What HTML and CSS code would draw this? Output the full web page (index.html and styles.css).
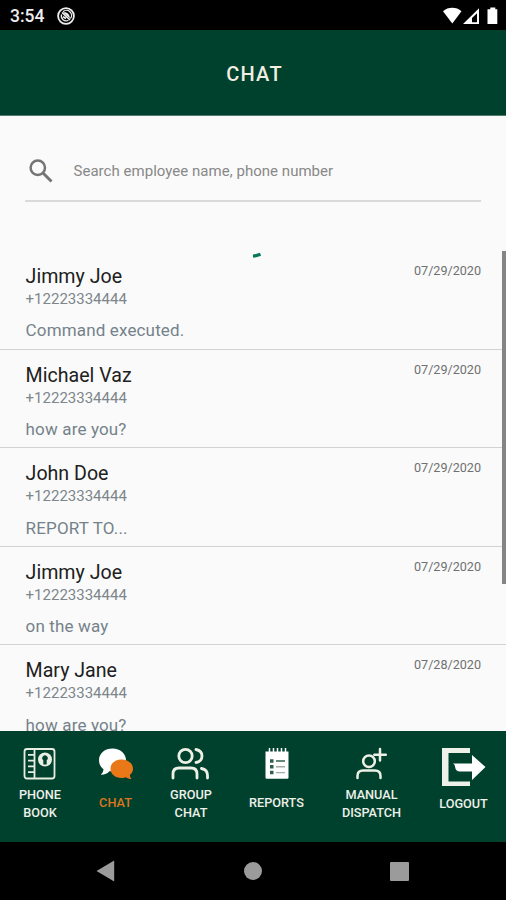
FILE: index.html
```html
<!DOCTYPE html>
<html lang="en">
<head>
<meta charset="utf-8">
<title>Chat</title>
<link rel="stylesheet" href="styles.css">
</head>
<body>
<div class="phone">
  <div class="status">
    <span class="clock">3:54</span>
    <svg class="alert" width="18" height="18" viewBox="0 0 18 18" fill="none" stroke="#eee"><circle cx="9" cy="9" r="7.9" stroke-width="1.8"/><path d="M4.600 7.500A4.800 4.800 0 0 0 11.500 13.200M6 4.800A5 5 0 0 1 13.400 11.500" stroke-width="1.300"/><path d="M6 5.500C9.500 4.500 13 7 12.800 11.500Z" fill="#eee" stroke="none"/><path d="M5 5.500L13 13M6 9.800l3 1.700" stroke-width="1.600"/></svg>
    <svg class="signals" width="56" height="18" viewBox="0 0 56 18" fill="#fff"><path d="M1 4.300C6-.3 14.500-.3 19.500 4.300L10.300 16.500Z"/><path fill-rule="evenodd" d="M21 17L37 1.300V17ZM30 15.200H35V6.200L30 11Z"/><path d="M48.300.500h5v1.800h2V17h-9.800V2.300h2.800Z"/></svg>
  </div>
  <header class="header"><h1>CHAT</h1></header>
  <main class="content">
    <div class="search">
      <svg width="24" height="24" viewBox="0 0 24 24" fill="none" stroke="#747474" stroke-width="2.500"><circle cx="8.800" cy="8.800" r="7.200"/><path d="M14 14l8.500 8.500" stroke-width="3"/></svg>
      <span>Search employee name, phone number</span>
    </div>
    <div class="list">
      <article class="row"><div class="top"><h2>Jimmy Joe</h2><time>07/29/2020</time></div><p class="number">+12223334444</p><p class="message">Command executed.</p></article>
      <article class="row"><div class="top"><h2>Michael Vaz</h2><time>07/29/2020</time></div><p class="number">+12223334444</p><p class="message">how are you?</p></article>
      <article class="row"><div class="top"><h2>John Doe</h2><time>07/29/2020</time></div><p class="number">+12223334444</p><p class="message">REPORT TO...</p></article>
      <article class="row"><div class="top"><h2>Jimmy Joe</h2><time>07/29/2020</time></div><p class="number">+12223334444</p><p class="message">on the way</p></article>
      <article class="row"><div class="top"><h2>Mary Jane</h2><time>07/28/2020</time></div><p class="number">+12223334444</p><p class="message">how are you?</p></article>
      <svg class="spinner" width="10" height="6" viewBox="0 0 10 6"><path d="M1 4.200Q4 4 8.500 2.300" fill="none" stroke="#08775b" stroke-width="3.200"/></svg>
      <div class="scrollbar"></div>
    </div>
  </main>
  <nav class="tabs">
    <div class="tab">
      <svg width="34" height="34" viewBox="0 0 34 34" fill="none" stroke="#e8eee2" stroke-width="1.800"><rect x="1.500" y="2" width="30" height="29.500" rx="2.500"/><path d="M11.500 2v29.500M5 7.800h7M5 13.600h7M5 19.400h7M5 25.200h7"/><circle cx="22" cy="12.500" r="7" fill="#e8eee2" stroke="none"/><path d="M20.300 17.500v-4.200a2.700 2.700 0 1 1 3.400 0v4.200Z" fill="#00412e" stroke="none"/></svg>
      <span>PHONE<br>BOOK</span>
    </div>
    <div class="tab active single">
      <svg width="36" height="34" viewBox="0 0 36 34"><path d="M14.500 1.500C7 1.500 1 6.300 1 13c0 4 1.500 7 4.500 9.200-.2 2.500-1.200 4-2.700 5.500 4 0 7-1.500 8.500-3.500h4C23 24 28 19 28 13S22.500 1.500 14.500 1.500Z" fill="#fff"/><path d="M23.500 12.500c-6.700 0-11 4-11 9.200s4.500 9.300 11 9.300c2 0 3.200-.2 4.500-.7 1.500 1.200 3.200 1.800 5.500 1.800-1.200-1.200-1.600-2.700-1.500-4.300 2-1.700 3-3.700 3-6.100 0-5.200-4.800-9.200-11.500-9.200Z" fill="#e97818"/></svg>
      <span>CHAT</span>
    </div>
    <div class="tab">
      <svg width="40" height="34" viewBox="0 0 40 34" fill="none" stroke="#edf0e5" stroke-width="2.800" stroke-linecap="round" stroke-linejoin="round"><circle cx="14.500" cy="9" r="6.700"/><path d="M2 31v-4q0-6 6-6h12q6 0 6 6v4M25 2.500c8 1.500 8 11.500 0 13M30.500 21.500q6 1 6 7V31"/></svg>
      <span>GROUP<br>CHAT</span>
    </div>
    <div class="tab single">
      <svg width="26" height="34" viewBox="0 0 26 34"><path d="M1.500 4.500h23v26q0 1.200-1.200 1.200H2.700q-1.200 0-1.200-1.200Z" fill="#fff"/><path d="M5.500 1v4M9.500 1v4M13.500 1v4M17.500 1v4M21.500 1v4" stroke="#fff" stroke-width="1.500"/><path d="M6 12.200h3.500v3.500H6ZM6 18h3.500v3.500H6ZM6 23.800h3.500v3.500H6Z" fill="#31604e"/><path d="M12 14h9" stroke="#31604e" stroke-width="1.500"/><path d="M12 19.800h9M12 25.600h9" stroke="#9faea4" stroke-width="1.400"/></svg>
      <span>REPORTS</span>
    </div>
    <div class="tab">
      <svg width="34" height="34" viewBox="0 0 34 34" fill="none" stroke="#edf0e5" stroke-width="2.500" stroke-linecap="round"><circle cx="14" cy="14.300" r="5.800"/><path d="M2.500 31v-2q0-5.500 5.500-5.500h12q5.500 0 5.500 5.500v2M25 2v11.500M19.300 7.700h11.500"/></svg>
      <span>MANUAL<br>DISPATCH</span>
    </div>
    <div class="tab single logout">
      <svg width="46" height="40" viewBox="0 0 46 40"><path d="M1 1h28v5H7.500v28.500H29v4.500H1Z" fill="#edf1e8"/><path d="M12 16.500h19V8l13.500 12L31 33v-8.500H19q-4.500 0-5-5Q14 17.500 12 16.500Z" fill="#fff"/></svg>
      <span>LOGOUT</span>
    </div>
  </nav>
  <footer class="system">
    <svg width="19" height="22" viewBox="0 0 19 22" fill="#9b9b9b"><path d="M18.200.500v21L.500 11Z"/></svg>
    <svg width="18" height="18" viewBox="0 0 18 18" fill="#9b9b9b"><circle cx="9" cy="9" r="9"/></svg>
    <svg width="19" height="19" viewBox="0 0 19 19" fill="#9b9b9b"><rect width="19" height="19" rx="1"/></svg>
  </footer>
</div>
</body>
</html>
```

FILE: styles.css
```css
* { box-sizing: border-box; }
body { margin: 0; background: #000; font-family: Roboto, "Liberation Sans", sans-serif; }
h1, h2, p { margin: 0; font-weight: 400; }
svg { display: block; flex: none; }
.phone { width: 506px; height: 900px; display: flex; flex-direction: column; overflow: hidden; }
.status { height: 30px; flex: none; display: flex; align-items: center; padding: 1px 8px 0 10px; color: #eee; }
.clock { width: 47px; font-size: 17.5px; font-weight: 500; }
.signals { margin-left: auto; }
.header { height: 86px; flex: none; display: flex; align-items: center; justify-content: center; background: #00412e; border-bottom: 1px solid #537b6d; }
.header h1 { color: #f2eee1; font-size: 20px; font-weight: 500; letter-spacing: 1.25px; line-height: 24px; padding: 2px 0 0 3px; }
.content { height: 615px; flex: none; display: flex; flex-direction: column; background: #fafafa; }
.search { flex: none; height: 86px; margin: 0 25px; padding: 26px 0 0 4px; border-bottom: 2px solid #dadada; display: flex; align-items: center; gap: 20.5px; color: #888; font-size: 15px; }
.search span { letter-spacing: .03px; }
.list { flex: 1; margin-top: 49px; min-height: 0; position: relative; overflow: hidden; }
.row { height: 98.6px; border-bottom: 1.5px solid #d2d2d2; padding: 12px 25px 0 25.6px; }
.top { display: flex; justify-content: space-between; height: 26px; }
.top h2 { color: #202020; font-size: 19.6px; line-height: 27px; }
.top time { color: #707070; font-size: 12.6px; line-height: 15px; }
.number { color: #7c868b; font-size: 15px; line-height: 20px; }
.message { color: #75828a; font-size: 17px; line-height: 22px; margin-top: 10.4px; letter-spacing: .15px; }
.spinner { position: absolute; left: 252px; top: 1px; }
.scrollbar { position: absolute; right: 0; top: 0; width: 4px; height: 333px; background: #858585; }
.tabs { height: 111px; flex: none; display: grid; grid-template-columns: 80px 71px 80px 91px 99px 85px; background: #00412e; }
.tab { display: flex; flex-direction: column; align-items: center; padding-top: 16px; color: #eef0e8; text-align: center; font-size: 12.7px; font-weight: 500; line-height: 18px; }
.tab span { margin-top: 5px; }
.single span { margin-top: 13px; }
.active { color: #dc751e; }
.logout span { margin-top: 7.500px; }
.system { height: 58px; flex: none; display: flex; align-items: center; justify-content: space-between; background: #000; padding: 0 97px 0 96px; }
```
